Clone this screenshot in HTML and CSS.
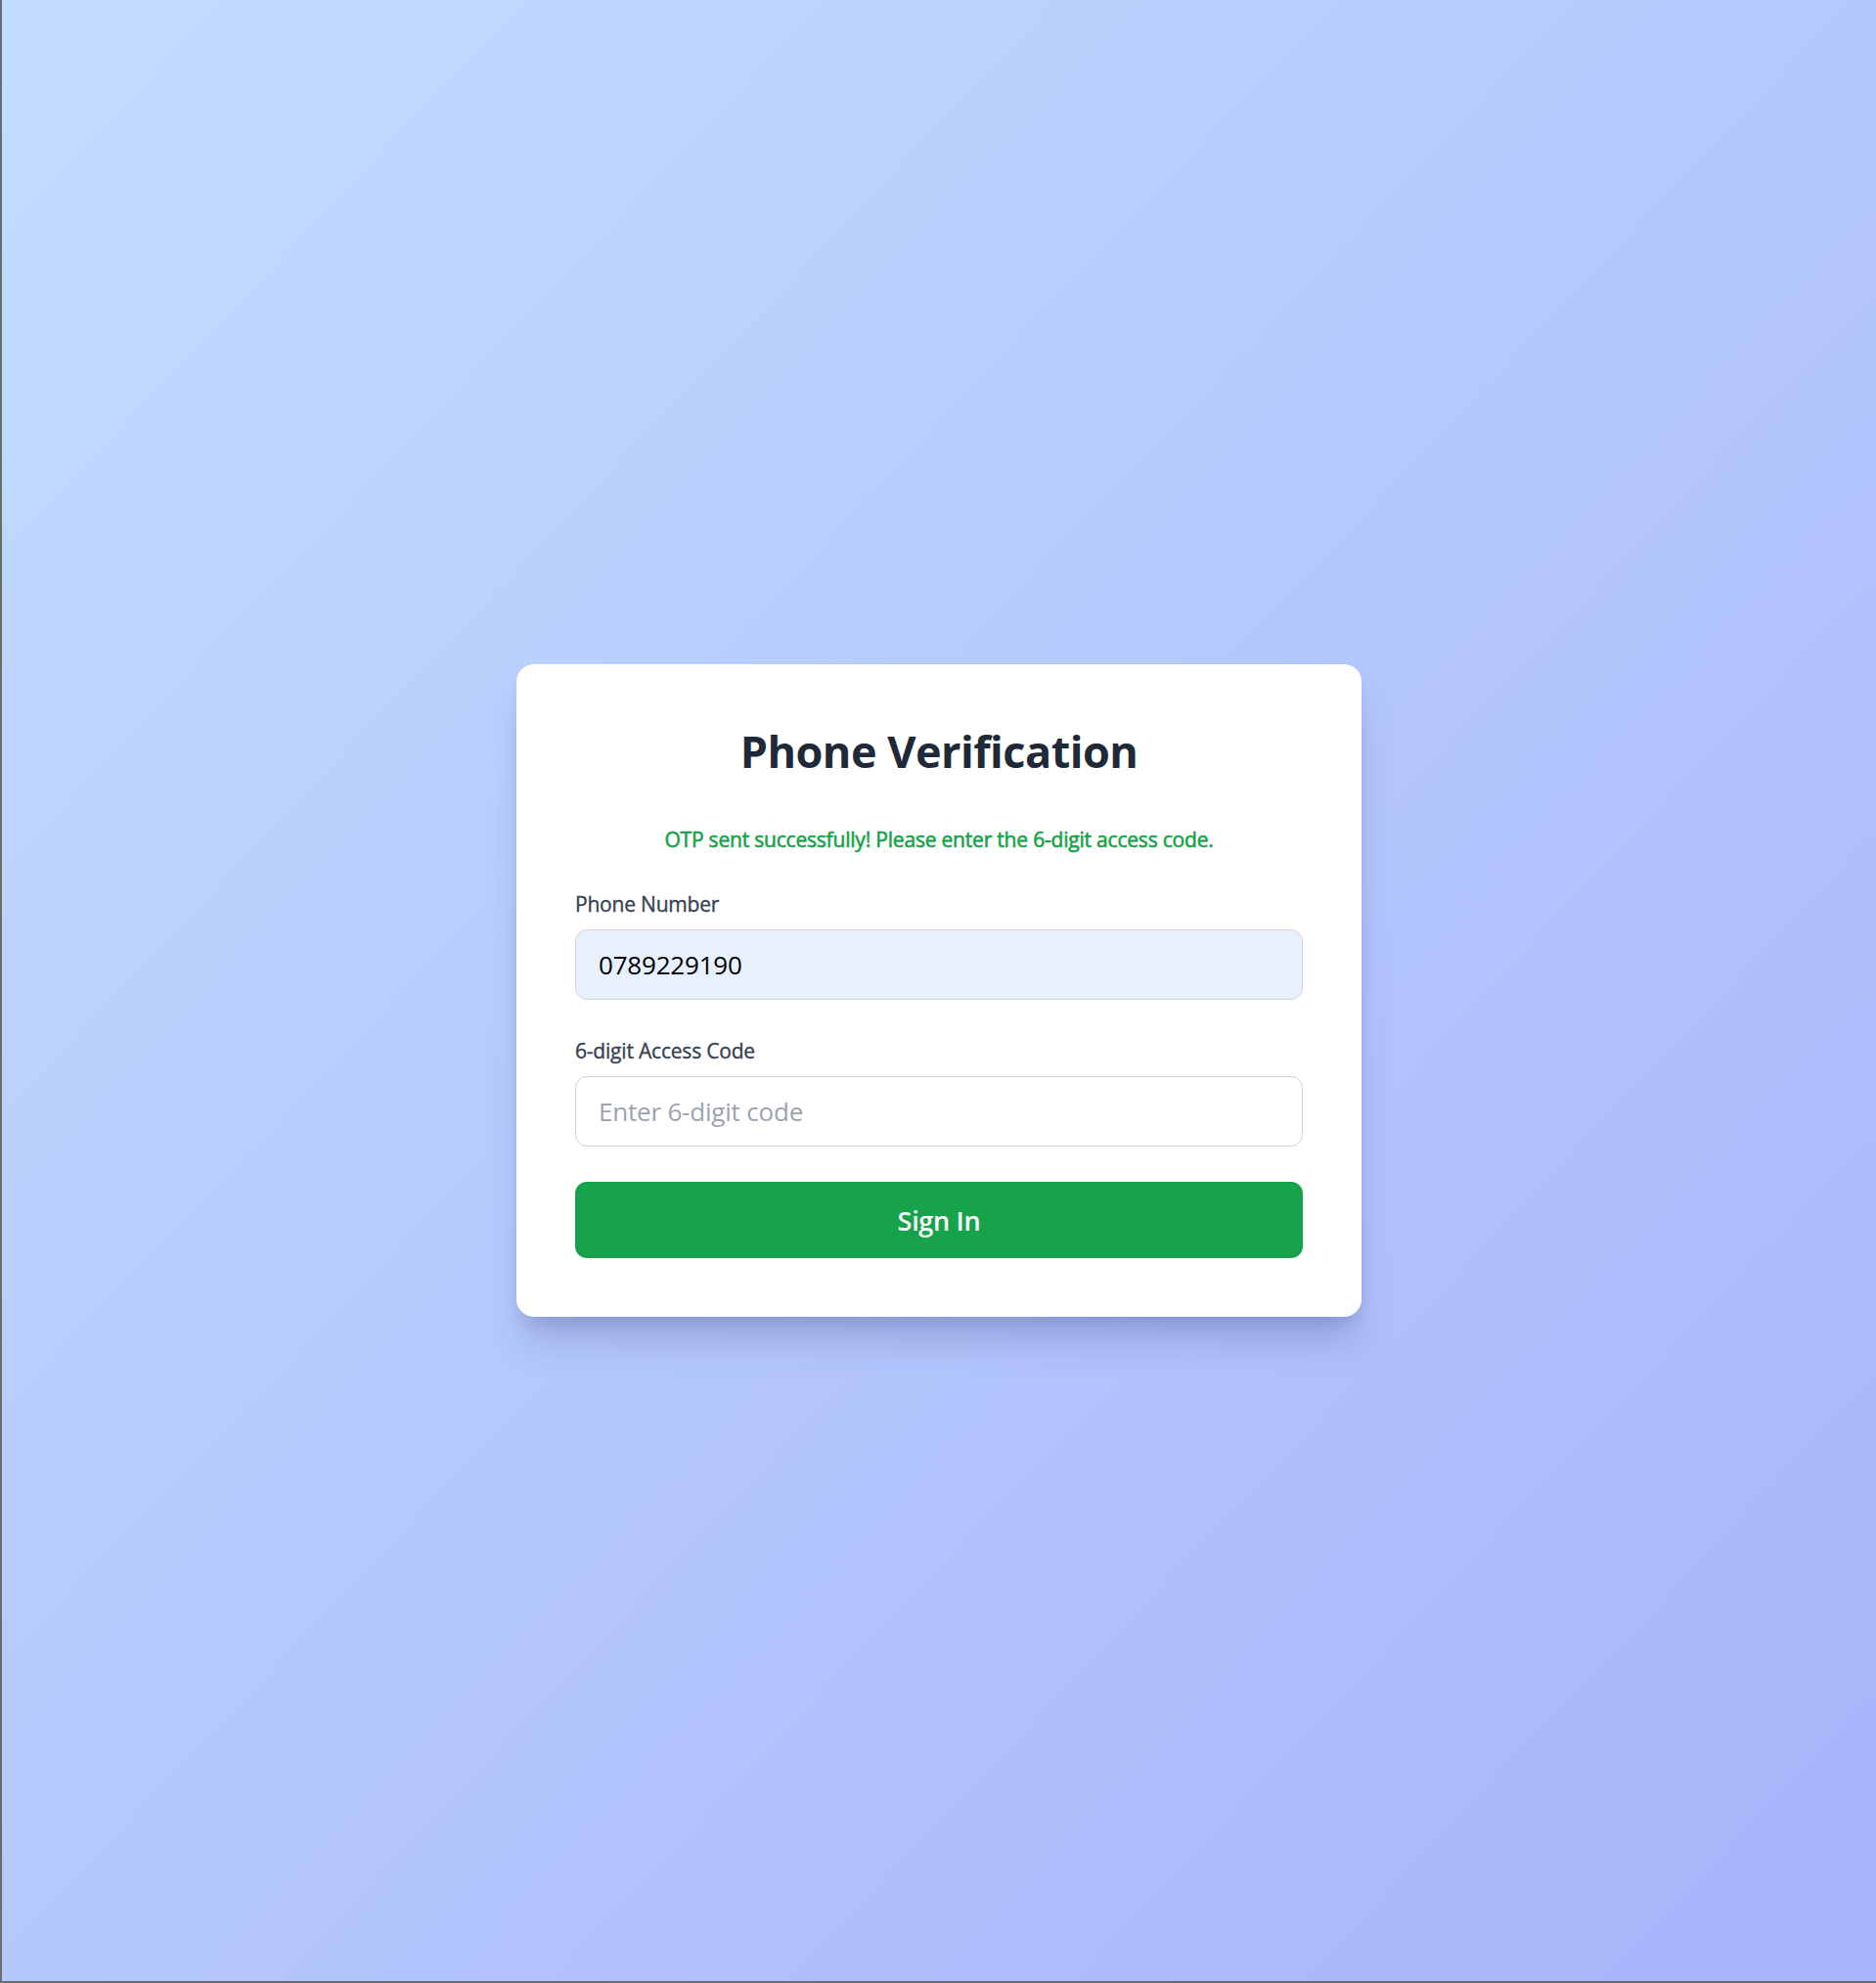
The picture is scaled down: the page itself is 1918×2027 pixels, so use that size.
FILE: index.html
```html
<!DOCTYPE html>
<html lang="en">
<head>
<meta charset="utf-8">
<title>Phone Verification</title>
<link rel="stylesheet" href="styles.css">
</head>
<body>
<main class="page">
  <div class="card">
    <h1 class="title">Phone Verification</h1>
    <p class="message">OTP sent successfully! Please enter the 6-digit access code.</p>
    <form class="form">
      <div class="field">
        <label class="label" for="phone">Phone Number</label>
        <input class="input input-filled" id="phone" type="tel" value="0789229190">
      </div>
      <div class="field">
        <label class="label" for="code">6-digit Access Code</label>
        <input class="input" id="code" type="text" placeholder="Enter 6-digit code">
      </div>
      <button class="button" type="button">Sign In</button>
    </form>
  </div>
</main>
</body>
</html>
```
FILE: styles.css
```css
html, body {
  margin: 0;
  padding: 0;
  height: 100%;
}
body {
  font-family: "Open Sans", "Noto Sans", sans-serif;
  background: #6b6b6b;
}
.page {
  box-sizing: border-box;
  min-height: 2025px;
  margin-left: 2px;
  display: flex;
  align-items: center;
  justify-content: center;
  background: linear-gradient(to bottom right, #c2ddff, #a7b3fa);
}
.card {
  box-sizing: border-box;
  width: 864px;
  background: #ffffff;
  border-radius: 18px;
  padding: 60px;
  box-shadow: 0 30px 38px -8px rgba(40, 50, 110, 0.22), 0 12px 15px -6px rgba(40, 50, 110, 0.12);
}
.title {
  margin: 2px 0 48px;
  font-size: 45px;
  line-height: 54px;
  font-weight: 700;
  color: #1f2937;
  text-align: center;
  letter-spacing: -0.5px;
}
.message {
  margin: 0 0 36px;
  font-size: 21px;
  line-height: 30px;
  font-weight: 400;
  color: #16a34a;
  text-align: center;
  letter-spacing: -0.2px;
  -webkit-text-stroke: 0.6px #16a34a;
}
.form {
  display: flex;
  flex-direction: column;
  gap: 36px;
}
.form .field + .field {
  margin-top: 1px;
}
.field {
  display: flex;
  flex-direction: column;
}
.label {
  font-size: 21px;
  line-height: 31px;
  font-weight: 400;
  color: #374151;
  margin-bottom: 10px;
  letter-spacing: -0.2px;
  -webkit-text-stroke: 0.35px #374151;
}
.input {
  box-sizing: border-box;
  height: 72px;
  width: 100%;
  padding: 0 23px;
  border: 1.5px solid #d1d5db;
  border-radius: 12px;
  font-family: "Open Sans", "Noto Sans", sans-serif;
  font-size: 26px;
  color: #000000;
  background: #ffffff;
  outline: none;
  letter-spacing: -0.2px;
}
.input::placeholder {
  color: #9ca3af;
}
.input-filled {
  background: #e8f0fe;
}
.button {
  height: 78px;
  width: 100%;
  border: none;
  border-radius: 12px;
  background: #17a34b;
  color: #ffffff;
  font-family: "Open Sans", "Noto Sans", sans-serif;
  font-size: 27px;
  font-weight: 600;
  letter-spacing: -0.3px;
  cursor: pointer;
}
```
